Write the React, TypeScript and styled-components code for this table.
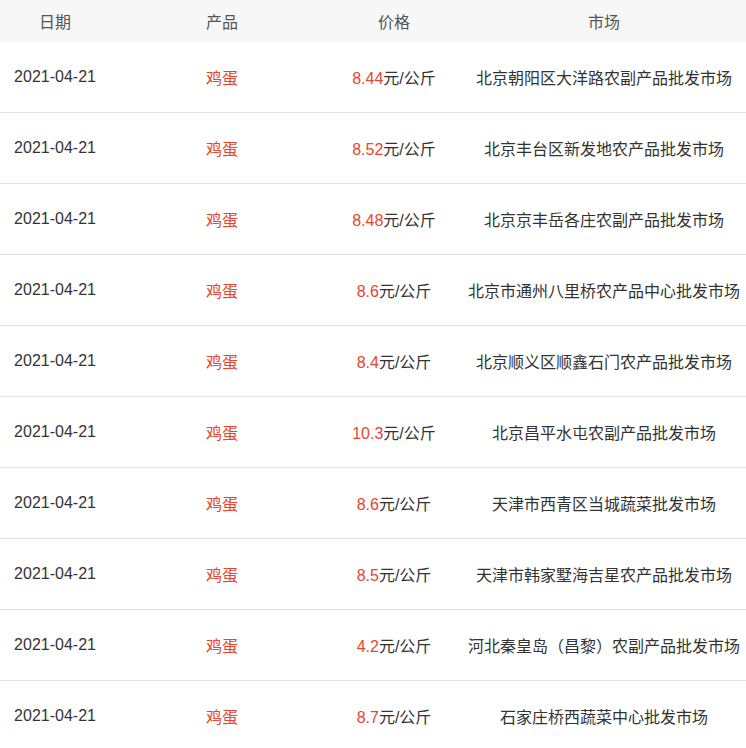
import React from "react";
import styled, { createGlobalStyle } from "styled-components";

const Global = createGlobalStyle`
  html, body { margin: 0; padding: 0; background: #fff; }
  body { font-family: "Liberation Sans", Arial, "Noto Sans CJK SC", sans-serif; }
`;

const Table = styled.div`
  width: 746px;
  font-size: 16px;
  color: #333;
`;

const Row = styled.div<{ $head?: boolean }>`
  display: grid;
  grid-template-columns: 110px 224px 120px 1fr;
  align-items: center;
  height: ${(p) => (p.$head ? "42px" : "70px")};
  background: ${(p) => (p.$head ? "#f7f7f7" : "#fff")};
  border-bottom: ${(p) => (p.$head ? "none" : "1px solid #e3e3e3")};
  color: ${(p) => (p.$head ? "#555" : "#333")};
  &:last-child { border-bottom: none; }
`;

const Cell = styled.div<{ $pl?: number }>`
  text-align: center;
  white-space: nowrap;
  padding-left: ${(p) => p.$pl ?? 0}px;
`;

const Red = styled.span`
  color: #e8452e;
`;

const data: [string, string][] = [
  ["8.44", "北京朝阳区大洋路农副产品批发市场"],
  ["8.52", "北京丰台区新发地农产品批发市场"],
  ["8.48", "北京京丰岳各庄农副产品批发市场"],
  ["8.6", "北京市通州八里桥农产品中心批发市场"],
  ["8.4", "北京顺义区顺鑫石门农产品批发市场"],
  ["10.3", "北京昌平水屯农副产品批发市场"],
  ["8.6", "天津市西青区当城蔬菜批发市场"],
  ["8.5", "天津市韩家墅海吉星农产品批发市场"],
  ["4.2", "河北秦皇岛（昌黎）农副产品批发市场"],
  ["8.7", "石家庄桥西蔬菜中心批发市场"],
];

export default function App() {
  return (
    <>
      <Global />
      <Table>
        <Row $head>
          <Cell>日期</Cell>
          <Cell>产品</Cell>
          <Cell>价格</Cell>
          <Cell $pl={8}>市场</Cell>
        </Row>
        {data.map(([price, market], i) => (
          <Row key={i}>
            <Cell>2021-04-21</Cell>
            <Cell>
              <Red>鸡蛋</Red>
            </Cell>
            <Cell>
              <Red>{price}</Red>元/公斤
            </Cell>
            <Cell $pl={8}>{market}</Cell>
          </Row>
        ))}
      </Table>
    </>
  );
}
